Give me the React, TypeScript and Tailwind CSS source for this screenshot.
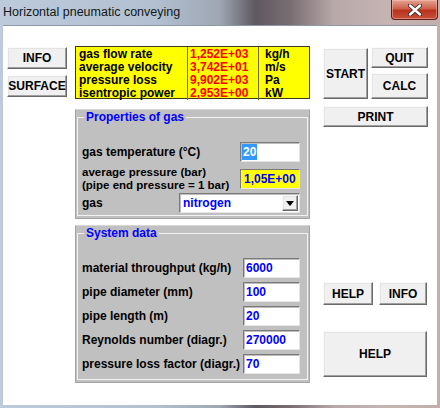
import React from 'react';

const btn =
  'flex items-center justify-center bg-[#f0f0f0] border border-[#696969] border-t-[#fbfbfb] border-l-[#fbfbfb] shadow-[inset_-1px_-1px_0_#a0a0a0,inset_1px_1px_0_#e3e3e3] text-[12px] font-bold text-black leading-none';

const sunken =
  'bg-white border border-t-[#7a7a7a] border-l-[#7a7a7a] border-b-[#e6e6e6] border-r-[#e6e6e6] shadow-[inset_1px_1px_0_#bdbdbd]';

const results = [
  { label: 'gas flow rate', value: '1,252E+03', unit: 'kg/h' },
  { label: 'average velocity', value: '3,742E+01', unit: 'm/s' },
  { label: 'pressure loss', value: '9,902E+03', unit: 'Pa' },
  { label: 'isentropic power', value: '2,953E+00', unit: 'kW' },
];

const systemRows = [
  { label: 'material throughput (kg/h)', value: '6000' },
  { label: 'pipe diameter (mm)', value: '100' },
  { label: 'pipe length (m)', value: '20' },
  { label: 'Reynolds number (diagr.)', value: '270000' },
  { label: 'pressure loss factor (diagr.)', value: '70' },
];

const CloseGlyph = () => (
  <svg width="14" height="12" viewBox="0 0 14 12">
    <path d="M2 1.5 L12 10.5 M12 1.5 L2 10.5" stroke="#3a2a2a" strokeWidth="4.2" strokeLinecap="round" />
    <path d="M2 1.5 L12 10.5 M12 1.5 L2 10.5" stroke="#ffffff" strokeWidth="2.4" strokeLinecap="round" />
  </svg>
);

export default function App() {
  return (
    <div className="w-[440px] h-[408px] flex flex-col bg-[linear-gradient(90deg,#bccadb_0%,#b2c0d1_35%,#9ea7b3_50%,#5e5860_58%,#7a6e72_66%,#b8a8a9_76%,#c6b4b3_88%,#c2aeac_100%)] font-['Liberation_Sans',Arial,sans-serif] overflow-hidden">
      {/* Title bar */}
      <div className="h-[25px] flex items-start justify-between shrink-0">
        <span className="pl-[3px] pt-[5px] text-[12.5px] leading-[15px] text-[#101820]">Horizontal pneumatic conveying</span>
        <div className="mr-[2px] w-[47px] h-[20px] flex items-center justify-center rounded-b-[4px] border border-t-0 border-[#5a1f1a] bg-[linear-gradient(180deg,#e3a493_0%,#d0604a_45%,#b8331e_55%,#c8503a_100%)] shadow-[inset_0_0_0_1px_rgba(255,200,190,0.45)]">
          <CloseGlyph />
        </div>
      </div>

      {/* Client area */}
      <div className="mx-[3px] mb-[3px] flex-1 bg-white border-t border-[#8d98a4] flex items-start">
        {/* Left buttons */}
        <div className="ml-[4px] pt-[21px] w-[60px] flex flex-col gap-[6px]">
          <button className={`${btn} h-[22px]`}>INFO</button>
          <button className={`${btn} h-[22px]`}>SURFACE</button>
        </div>

        {/* Middle column */}
        <div className="ml-[8px] pt-[20px] w-[235px] flex flex-col">
          <div className="h-[53px] bg-[#ffff00] border border-[#3c3c1c] grid grid-cols-[112px_71px_1fr] text-[12px] font-bold leading-[13px]">
            <div className="border-r border-[#6a6a30] pl-[3px] pt-[1px] text-black">
              {results.map((r) => (
                <div key={r.label}>{r.label}</div>
              ))}
            </div>
            <div className="border-r border-[#6a6a30] pl-[2px] pt-[1px] text-[#ff0000]">
              {results.map((r) => (
                <div key={r.label}>{r.value}</div>
              ))}
            </div>
            <div className="pl-[6px] pt-[1px] text-black">
              {results.map((r) => (
                <div key={r.label}>{r.unit}</div>
              ))}
            </div>
          </div>

          {/* Properties of gas */}
          <div className="mt-[10px] h-[110px] bg-[#c0c0c0] border border-[#a4a4a4] border-t-[#d6d6d6]">
            <fieldset className="mx-[1px] mb-[2px] border border-[#f2f2f2] pl-[4px] pr-[7px] pb-[2px]">
              <legend className="ml-[2px] px-[2px] h-[14px] text-[12px] leading-[14px] font-bold text-[#0000ff]">Properties of gas</legend>
              <div className="flex flex-col pt-[18px] text-[12px] font-bold text-black">
                <div className="h-[20px] flex items-center justify-between">
                  <span>gas temperature (°C)</span>
                  <div className={`${sunken} w-[60px] h-[20px] flex items-center pl-[1px]`}>
                    <span className="bg-[#3399ff] text-white px-[1px] leading-[16px]">20</span>
                  </div>
                </div>
                <div className="mt-[7px] h-[20px] flex items-center justify-between">
                  <div className="text-[11.5px] leading-[13px]">
                    <div>average pressure (bar)</div>
                    <div>(pipe end pressure = 1 bar)</div>
                  </div>
                  <div className="w-[60px] h-[20px] flex items-center pl-[3px] bg-[#ffff00] border border-t-[#7a7a7a] border-l-[#7a7a7a] border-b-[#e6e6e6] border-r-[#e6e6e6] text-[#0000ff]">
                    1,05E+00
                  </div>
                </div>
                <div className="mt-[4px] h-[20px] flex items-center justify-between">
                  <span>gas</span>
                  <div className={`${sunken} w-[121px] h-[20px] flex items-center justify-between pl-[3px] pr-[1px]`}>
                    <span className="text-[#0000ff]">nitrogen</span>
                    <div className={`${btn} w-[16px] h-[16px]`}>
                      <svg width="8" height="5" viewBox="0 0 8 5">
                        <path d="M0 0 H8 L4 5 Z" fill="#000" />
                      </svg>
                    </div>
                  </div>
                </div>
              </div>
            </fieldset>
          </div>

          {/* System data */}
          <div className="mt-[6px] h-[158px] bg-[#c0c0c0] border border-[#a4a4a4] border-t-[#d6d6d6]">
            <fieldset className="mx-[1px] mb-[2px] border border-[#f2f2f2] pl-[4px] pr-[7px] pb-[5px]">
              <legend className="ml-[2px] px-[2px] h-[14px] text-[12px] leading-[14px] font-bold text-[#0000ff]">System data</legend>
              <div className="flex flex-col gap-[4px] pt-[18px] text-[12px] font-bold text-black">
                {systemRows.map((r) => (
                  <div key={r.label} className="h-[20px] flex items-center justify-between">
                    <span>{r.label}</span>
                    <div className={`${sunken} w-[57px] h-[20px] flex items-center pl-[2px] text-[#0000ff]`}>{r.value}</div>
                  </div>
                ))}
              </div>
            </fieldset>
          </div>
        </div>

        {/* Right column */}
        <div className="ml-[13px] pt-[21px] w-[105px] flex flex-col">
          <div className="flex items-start gap-[3px]">
            <button className={`${btn} mt-[1px] w-[45px] h-[51px]`}>START</button>
            <div className="w-[57px] flex flex-col gap-[5px]">
              <button className={`${btn} h-[21px]`}>QUIT</button>
              <button className={`${btn} h-[26px]`}>CALC</button>
            </div>
          </div>
          <button className={`${btn} mt-[7px] h-[21px]`}>PRINT</button>
          <div className="mt-[155px] flex gap-[6px]">
            <button className={`${btn} w-[50px] h-[23px]`}>HELP</button>
            <button className={`${btn} w-[48px] h-[23px]`}>INFO</button>
          </div>
          <button className={`${btn} mt-[26px] w-[104px] h-[46px]`}>HELP</button>
        </div>
      </div>
    </div>
  );
}
